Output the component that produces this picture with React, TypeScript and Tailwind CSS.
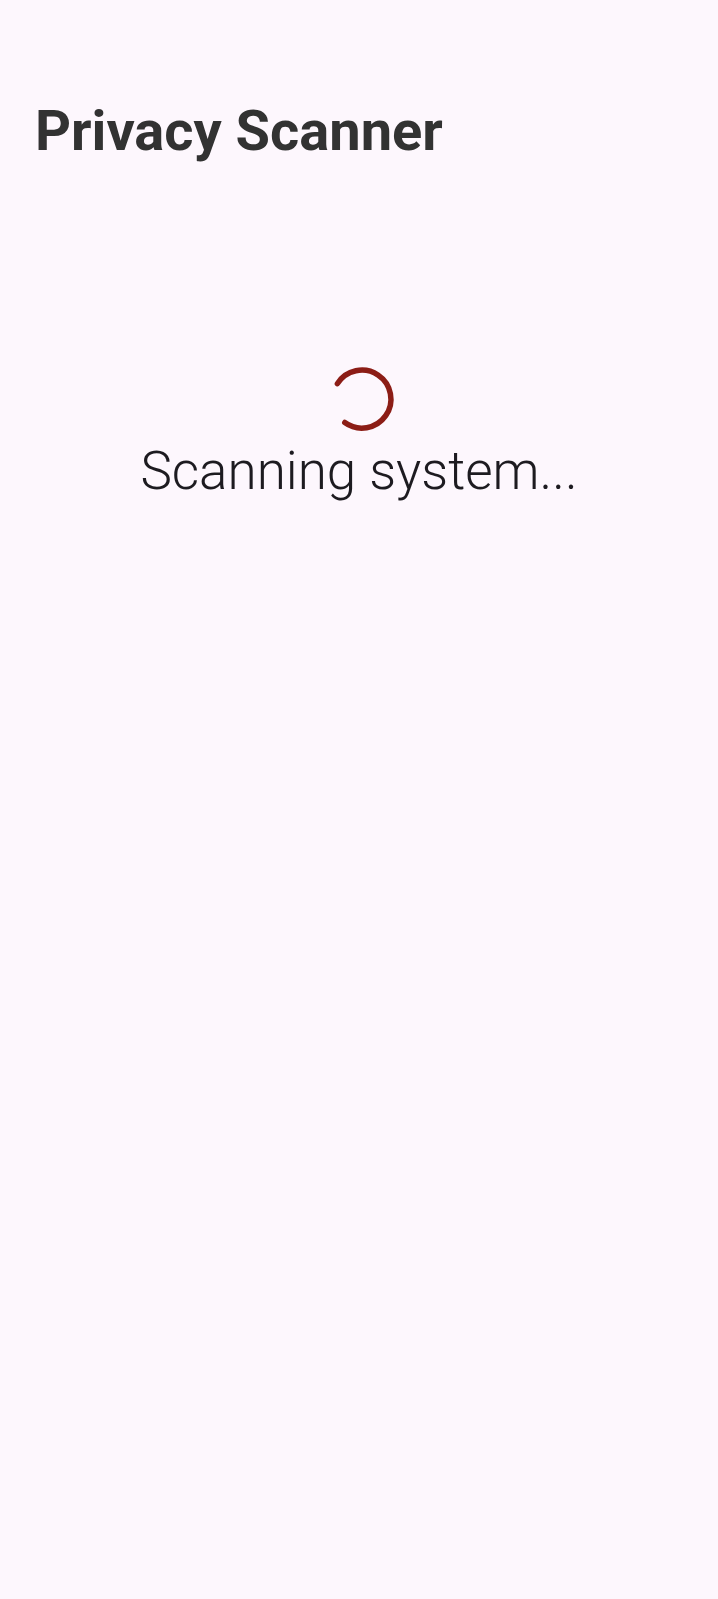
import React from "react";

const Spinner: React.FC = () => (
  <svg width="68" height="68" viewBox="0 0 68 68" fill="none">
    <path
      d="M9.4 18.6 A29 29 0 1 1 16.8 57.5"
      stroke="#8c1d16"
      strokeWidth="5.5"
      strokeLinecap="round"
    />
  </svg>
);

const App: React.FC = () => {
  return (
    <div
      className="min-h-[1599px] w-full bg-[#fdf7fd] flex flex-col"
      style={{ fontFamily: "Roboto, 'Liberation Sans', sans-serif" }}
    >
      <header className="pt-[103px] px-[35px]">
        <h1 className="text-[56px] leading-none font-bold text-[#323232]">
          Privacy Scanner
        </h1>
      </header>
      <main className="flex flex-col items-center mt-[206px]">
        <div className="ml-[6px]">
          <Spinner />
        </div>
        <p className="mt-[12px] text-[53px] leading-none font-light text-[#1d1b20]">
          Scanning system...
        </p>
      </main>
    </div>
  );
};

export default App;
